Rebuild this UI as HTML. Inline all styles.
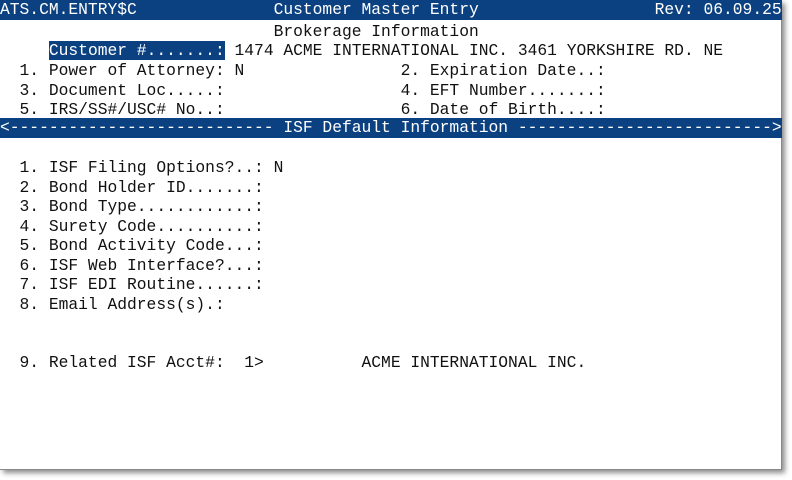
<!DOCTYPE html>
<html><head><meta charset="utf-8"><style>
html,body{margin:0;padding:0;background:#fff;width:792px;height:480px;overflow:hidden}
#box{position:absolute;left:0;top:0;width:781px;height:469px;background:#fff;border-right:1px solid #888;border-bottom:1px solid #888;box-shadow:3px 3px 5px rgba(0,0,0,.45)}
.l{position:absolute;left:0;height:19.5px;line-height:19.5px;font-family:"Liberation Mono",monospace;font-size:16.3px;white-space:pre;color:#111;width:782px}
.bar{background:#0b4181;color:#fff}
.hl{background:#0b4181;color:#fff}
</style></head><body><div id="box">
<div class="l bar" style="top:0;height:20px">ATS.CM.ENTRY$C              Customer Master Entry                  Rev: 06.09.25</div>
<div class="l" style="top:22px">                            Brokerage Information</div>
<div class="l" style="top:41px">     <span class="hl">Customer #.......:</span> 1474 ACME INTERNATIONAL INC. 3461 YORKSHIRE RD. NE</div>
<div class="l" style="top:61px">  1. Power of Attorney: N                2. Expiration Date..:</div>
<div class="l" style="top:80.5px">  3. Document Loc.....:                  4. EFT Number.......:</div>
<div class="l" style="top:100px">  5. IRS/SS#/USC# No..:                  6. Date of Birth....:</div>
<div class="l bar" style="top:118px;height:20px">&lt;--------------------------- ISF Default Information --------------------------&gt;</div>
<div class="l" style="top:158px">  1. ISF Filing Options?..: N</div>
<div class="l" style="top:177.5px">  2. Bond Holder ID.......:</div>
<div class="l" style="top:197px">  3. Bond Type............:</div>
<div class="l" style="top:216.5px">  4. Surety Code..........:</div>
<div class="l" style="top:236px">  5. Bond Activity Code...:</div>
<div class="l" style="top:255.5px">  6. ISF Web Interface?...:</div>
<div class="l" style="top:275px">  7. ISF EDI Routine......:</div>
<div class="l" style="top:294.5px">  8. Email Address(s).:</div>
<div class="l" style="top:353px">  9. Related ISF Acct#:  1&gt;          ACME INTERNATIONAL INC.</div>
</div></body></html>
